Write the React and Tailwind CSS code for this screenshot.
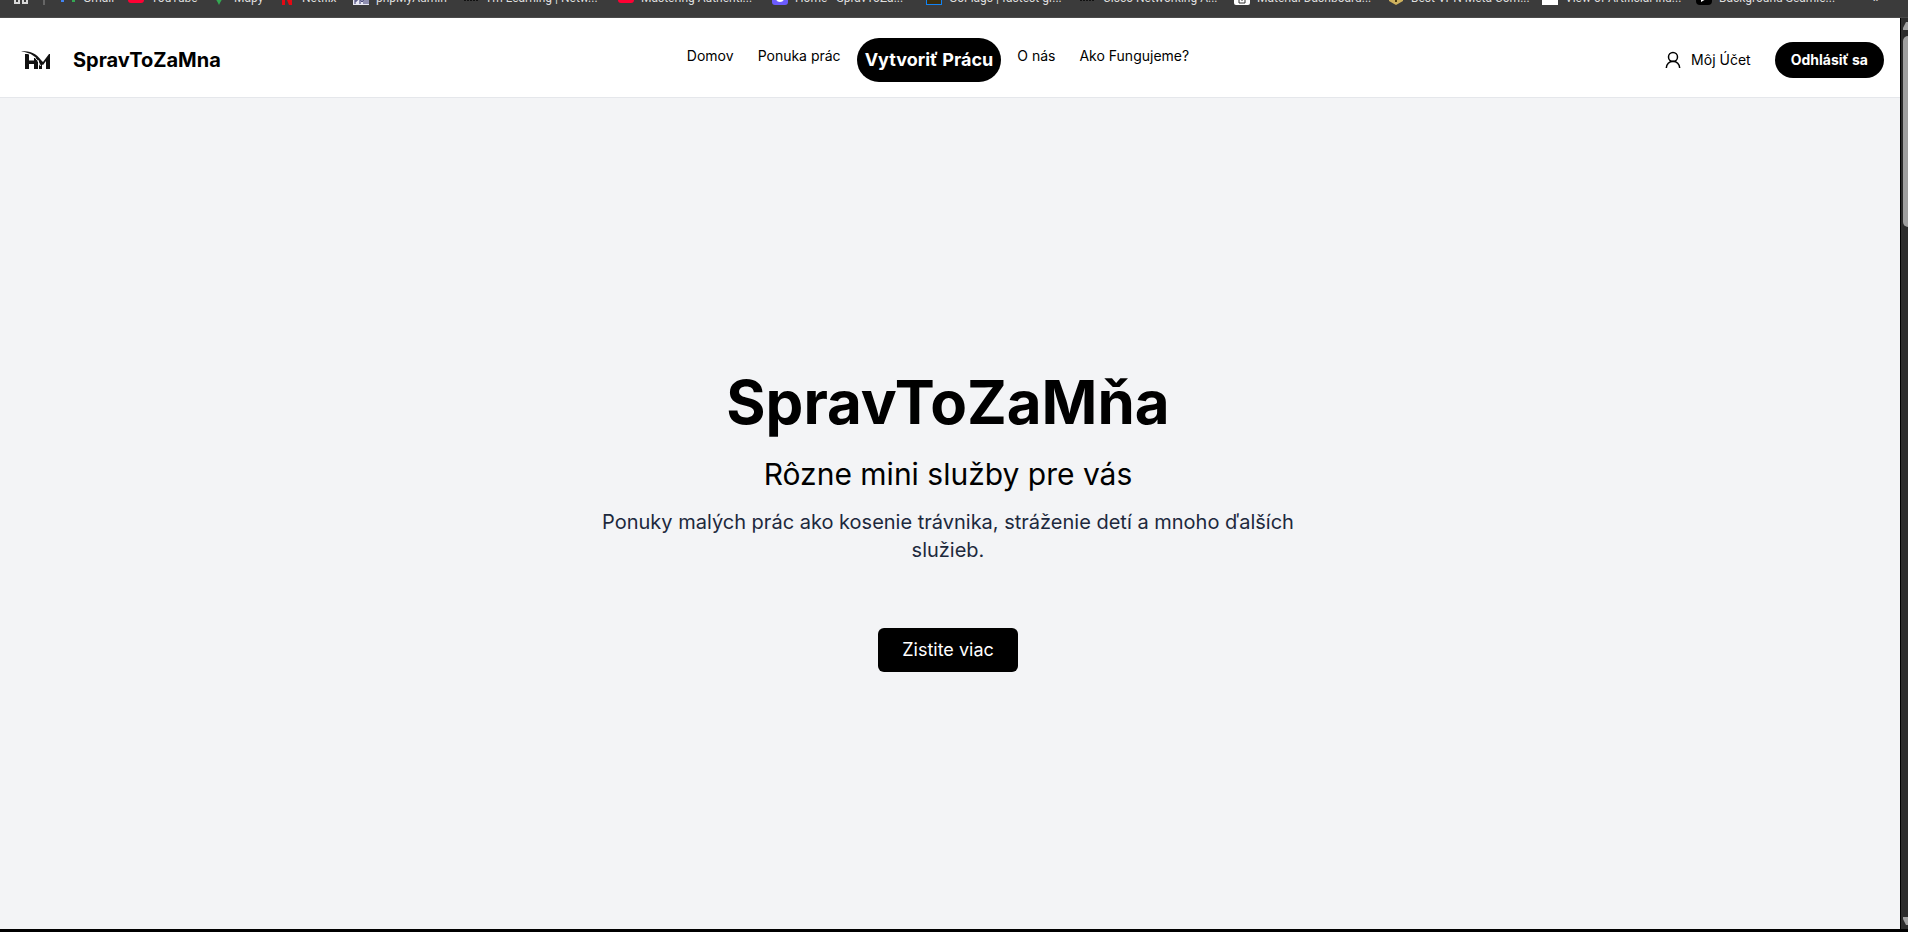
import React from "react";

const bookmarks = [
  { label: "Gmail", w: "w-[68px]", icon: "gmail" },
  { label: "YouTube", w: "w-[83px]", icon: "youtube" },
  { label: "Mapy", w: "w-[68px]", icon: "pin" },
  { label: "Netflix", w: "w-[74px]", icon: "netflix" },
  { label: "phpMyAdmin", w: "w-[111px]", icon: "pma" },
  { label: "I'm Learning | Netw...", w: "w-[154px]", icon: "cisco" },
  { label: "Mastering Authenti...", w: "w-[154px]", icon: "youtube" },
  { label: "Home - SpravToZa...", w: "w-[154px]", icon: "home" },
  { label: "GoFlags | fastest gr...", w: "w-[154px]", icon: "flags" },
  { label: "Cisco Networking A...", w: "w-[154px]", icon: "cisco" },
  { label: "Material Dashboard...", w: "w-[154px]", icon: "box" },
  { label: "Best VPN Meta Com...", w: "w-[154px]", icon: "hex" },
  { label: "View of Artificial Ind...", w: "w-[154px]", icon: "blank" },
  { label: "Background Seamle...", w: "w-[154px]", icon: "play" },
];

const drawings = {
  gmail: (
    <>
      <path d="M1 2v11h3V5z" fill="#4285f4" />
      <path d="M15 2v11h-3V5z" fill="#34a853" />
      <path d="M1 2l7 6 7-6v3l-7 6-7-6z" fill="#ea4335" />
    </>
  ),
  youtube: (
    <>
      <rect y="3" width="16" height="11" rx="3" fill="#ff0033" />
      <path d="M6 6l5 2.500-5 2.500z" fill="#fff" />
    </>
  ),
  pin: <path d="M8 16C6 11 3 9 3 5a5 5 0 0110 0c0 4-3 6-5 11z" fill="#34a853" />,
  netflix: <path d="M3 0h3l4 10V0h3v16h-3L6 6v10H3z" fill="#e50914" />,
  pma: (
    <>
      <path d="M0 0h16v16H0z" fill="#e8e8f4" />
      <path d="M2 15v-5h2v2H2m5 3v-5l2 3 2-3v5m2 0v-5h2v5" stroke="#34346a" fill="none" />
    </>
  ),
  cisco: <path d="M1 8v4m3-5v5m3-3v3m3-5v5m3-3v3" stroke="#111" strokeWidth="2" />,
  home: (
    <>
      <rect width="16" height="16" rx="3" fill="#6c5cff" />
      <circle cx="8" cy="9" r="4" fill="#fff" />
    </>
  ),
  flags: <rect x="0.500" y="0.500" width="15" height="15" fill="#3c2f10" stroke="#1283f5" />,
  box: (
    <>
      <rect width="16" height="16" rx="2" fill="#fff" />
      <path d="M5 8h6v6H5zM7 11h2" stroke="#333" fill="none" />
    </>
  ),
  hex: (
    <>
      <path d="M8 0l7 4v8l-7 4-7-4V4z" fill="#cfb25e" />
      <path d="M8 8v5" stroke="#4b3b12" strokeWidth="2" />
    </>
  ),
  blank: <rect width="16" height="16" fill="#fff" />,
  play: (
    <>
      <rect width="16" height="16" rx="4" fill="#000" />
      <path d="M5 5l7 4-7 4z" fill="#fff" />
    </>
  ),
};

function BookmarksBar() {
  return (
    <div className="flex h-[18px] shrink-0 items-end overflow-hidden border-b border-[#4a4a4a] bg-[#3b3b3b] pb-3 text-xs leading-[14px] text-[#dedede] font-[Roboto,sans-serif]">
      <div className="flex w-full items-end pl-[13px]">
        <svg viewBox="0 0 16 16" className="size-4 shrink-0" fill="none" stroke="#d8d8d8" strokeWidth="2" aria-hidden="true">
          <path d="M2 2h4v4H2zM10 2h4v4h-4zM2 10h4v4H2zM10 10h4v4h-4z" />
        </svg>
        <span className="ml-[14px] mr-[15px] h-4 w-0.5 shrink-0 bg-[#666]" />
        {bookmarks.map((b) => (
          <a key={b.label} href="#" className={`flex shrink-0 items-end gap-[7px] whitespace-nowrap ${b.w}`}>
            <svg viewBox="0 0 16 16" className="size-4 shrink-0" aria-hidden="true">
              {drawings[b.icon]}
            </svg>
            {b.label}
          </a>
        ))}
        <button type="button" aria-label="Ďalšie záložky" className="ml-auto mr-7 text-base leading-4">»</button>
      </div>
    </div>
  );
}

function Logo() {
  return (
    <svg viewBox="0 0 30 20" className="h-5 w-[30px]" aria-hidden="true">
      <path d="M5 4h4v6.500h5V8h4v11h-4v-5H9v5H5z" fill="#111" />
      <path d="M19 9l4 3 6-8h1v15h-4v-8l-3 4-1-1v5h-3z" fill="#111" />
      <path d="M4 3C12 3.500 17 8 20.500 16" fill="none" stroke="#fff" strokeWidth="1" />
      <path d="M1 1.500C10 0 18 4 23.500 13.500L22 15C17 7 11 2.500 1 1.500z" fill="#111" />
    </svg>
  );
}

function Header() {
  return (
    <header className="grid grid-cols-[1fr_auto_1fr] items-center border-b border-gray-200 bg-white px-4 pt-5 pb-[15px]">
      <a href="#" className="flex items-center gap-[23px] pl-1 text-xl font-bold">
        <Logo />
        SpravToZaMna
      </a>
      <nav className="mr-6 flex items-start gap-6 text-sm">
        <a href="#" className="pt-2">Domov</a>
        <a href="#" className="pt-2">Ponuka prác</a>
        <a href="#" className="-mx-2 rounded-full bg-black px-2 py-2 text-lg font-bold text-white">Vytvoriť Prácu</a>
        <a href="#" className="pt-2">O nás</a>
        <a href="#" className="pt-2">Ako Fungujeme?</a>
      </nav>
      <div className="flex items-center justify-end gap-6 text-sm">
        <a href="#" className="flex items-center gap-2">
          <svg viewBox="0 0 20 20" className="size-5" fill="none" stroke="currentColor" strokeWidth="1.500" aria-hidden="true">
            <circle cx="10" cy="7" r="4.500" />
            <path d="M3.300 18a6.700 6.700 0 0113.400 0" />
          </svg>
          Môj Účet
        </a>
        <button type="button" className="rounded-full bg-black px-4 py-2 font-bold text-white">Odhlásiť sa</button>
      </div>
    </header>
  );
}

function Scrollbar() {
  return (
    <div className="flex w-2 shrink-0 flex-col overflow-hidden border-l border-black bg-[#2c2c2c] pl-0.5" aria-hidden="true">
      <svg viewBox="0 0 5 8" className="mt-1 h-2 w-[5px]"><path d="M0 8V6l3-6h2v8z" fill="#a0a0a0" /></svg>
      <div className="mt-1.5 h-[191px] rounded-l-md bg-[#9f9f9f]" />
      <svg viewBox="0 0 5 8" className="mb-1 mt-auto h-2 w-[5px]"><path d="M0 0v2l3 6h2V0z" fill="#a0a0a0" /></svg>
    </div>
  );
}

export default function App() {
  return (
    <div className="flex min-h-screen flex-col bg-black text-black font-[Inter,sans-serif]">
      <BookmarksBar />
      <div className="mb-[3px] flex grow">
        <div className="flex min-w-0 grow flex-col bg-gray-100">
          <Header />
          <main className="flex grow flex-col items-center justify-center pt-4 pr-5 pl-4 text-center">
            <h1 className="text-6xl font-bold">SpravToZaMňa</h1>
            <p className="mt-6 text-3xl">Rôzne mini služby pre vás</p>
            <p className="mt-4 max-w-[720px] text-xl text-slate-800">
              Ponuky malých prác ako kosenie trávnika, stráženie detí a mnoho ďalších služieb.
            </p>
            <a href="#" className="mt-16 rounded-md bg-black px-6 py-2 text-lg text-white">Zistite viac</a>
          </main>
        </div>
        <Scrollbar />
      </div>
    </div>
  );
}
